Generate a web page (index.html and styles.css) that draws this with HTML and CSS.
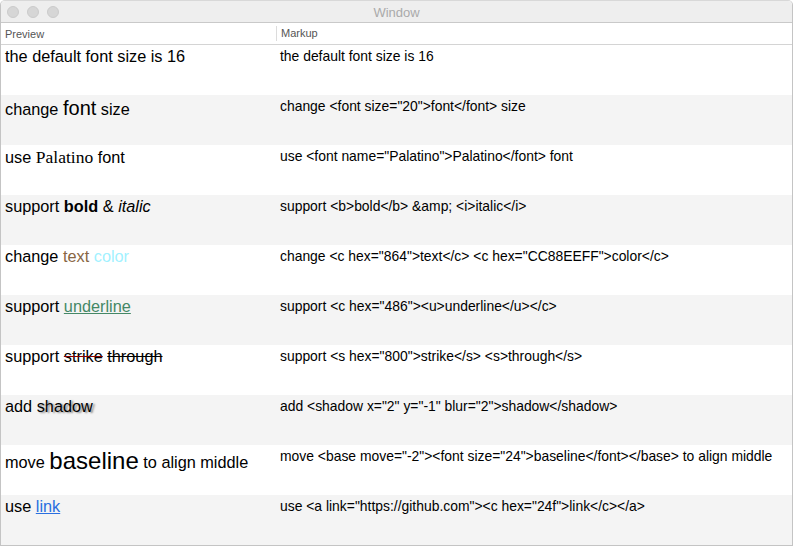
FILE: index.html
```html
<!DOCTYPE html>
<html>
<head>
<meta charset="utf-8">
<link rel="stylesheet" href="styles.css">
</head>
<body>
<div class="window">
  <div class="titlebar">
    <div class="lights"><span class="light"></span><span class="light"></span><span class="light"></span></div>
    <div class="title">Window</div>
  </div>
  <div class="table">
    <div class="head preview-head">Preview</div>
    <div class="head markup-head"><span>Markup</span></div>

    <div class="cell pv">the default font size is 16</div>
    <div class="cell mk">the default font size is 16</div>

    <div class="cell pv alt">change <span class="f20">font</span> size</div>
    <div class="cell mk alt">change &lt;font size="20"&gt;font&lt;/font&gt; size</div>

    <div class="cell pv">use <span class="pal">Palatino</span> font</div>
    <div class="cell mk">use &lt;font name="Palatino"&gt;Palatino&lt;/font&gt; font</div>

    <div class="cell pv alt">support <b>bold</b> &amp; <i>italic</i></div>
    <div class="cell mk alt">support &lt;b&gt;bold&lt;/b&gt; &amp;amp; &lt;i&gt;italic&lt;/i&gt;</div>

    <div class="cell pv">change <span class="c864">text</span> <span class="ccyan">color</span></div>
    <div class="cell mk">change &lt;c hex="864"&gt;text&lt;/c&gt; &lt;c hex="CC88EEFF"&gt;color&lt;/c&gt;</div>

    <div class="cell pv alt">support <span class="ul">underline</span></div>
    <div class="cell mk alt">support &lt;c hex="486"&gt;&lt;u&gt;underline&lt;/u&gt;&lt;/c&gt;</div>

    <div class="cell pv">support <span class="strike-red">strike</span> <span class="strike">through</span></div>
    <div class="cell mk">support &lt;s hex="800"&gt;strike&lt;/s&gt; &lt;s&gt;through&lt;/s&gt;</div>

    <div class="cell pv alt">add <span class="shadow">shadow</span></div>
    <div class="cell mk alt">add &lt;shadow x="2" y="-1" blur="2"&gt;shadow&lt;/shadow&gt;</div>

    <div class="cell pv">move <span class="f24">baseline</span> to align middle</div>
    <div class="cell mk">move &lt;base move="-2"&gt;&lt;font size="24"&gt;baseline&lt;/font&gt;&lt;/base&gt; to align middle</div>

    <div class="cell pv alt">use <span class="link">link</span></div>
    <div class="cell mk alt">use &lt;a link="https://github.com"&gt;&lt;c hex="24f"&gt;link&lt;/c&gt;&lt;/a&gt;</div>
  </div>
</div>
</body>
</html>
```

FILE: styles.css
```css
html, body {
  margin: 0;
  padding: 0;
  background: #ffffff;
}

.window {
  width: 793px;
  height: 546px;
  box-sizing: border-box;
  border: 1px solid #c4c4c4;
  border-top-color: #d8d8d8;
  border-radius: 5px 5px 0 0;
  overflow: hidden;
  background: #ffffff;
  font-family: "Liberation Sans", Arial, sans-serif;
  color: #000;
  display: flex;
  flex-direction: column;
}

.titlebar {
  height: 21px;
  flex: none;
  background: #eeeeee;
  border-bottom: 1px solid #c9c9c9;
  display: grid;
  grid-template-columns: 1fr auto 1fr;
  align-items: center;
}

.lights {
  display: flex;
  gap: 8px;
  padding-left: 6px;
}

.light {
  width: 12px;
  height: 12px;
  box-sizing: border-box;
  border-radius: 50%;
  background: #d6d6d6;
  border: 1px solid #cbcbcb;
}

.title {
  font-size: 13px;
  color: #aaaaaa;
  padding-top: 1px;
}

.table {
  display: grid;
  grid-template-columns: 275px 1fr;
  grid-template-rows: 22px;
  grid-auto-rows: 50px;
}

.head {
  font-size: 11px;
  color: #555555;
  border-bottom: 1px solid #d4d4d4;
  display: flex;
  align-items: center;
  box-sizing: border-box;
  height: 22px;
}

.preview-head {
  padding-left: 4px;
}

.markup-head {
  padding: 3px 0 4px;
}

.markup-head span {
  border-left: 1px solid #dcdcdc;
  padding-left: 4px;
  height: 15px;
  line-height: 15px;
  display: block;
}

.cell {
  white-space: nowrap;
  overflow: hidden;
}

.pv {
  font-size: 16.3px;
  padding-left: 4px;
  padding-top: 2px;
}

.mk {
  font-size: 13.9px;
  padding-left: 4px;
  padding-top: 3px;
}

.alt {
  background: #f4f4f4;
}

.f20 {
  font-size: 20px;
}

.f24 {
  font-size: 24px;
  vertical-align: -1px;
}

.pal {
  font-family: "Liberation Serif", "Times New Roman", serif;
  font-size: 17.5px;
}

.c864 {
  color: #886644;
}

.ccyan {
  color: rgba(136, 238, 255, 0.8);
}

.ul {
  color: #448866;
  text-decoration: underline;
}

.strike-red {
  text-decoration: line-through;
  text-decoration-color: #880000;
}

.strike {
  text-decoration: line-through;
}

.shadow {
  text-shadow: 2px 1px 2px rgba(0, 0, 0, 0.45);
}

.link {
  color: #2a6fe0;
  text-decoration: underline;
}
```
